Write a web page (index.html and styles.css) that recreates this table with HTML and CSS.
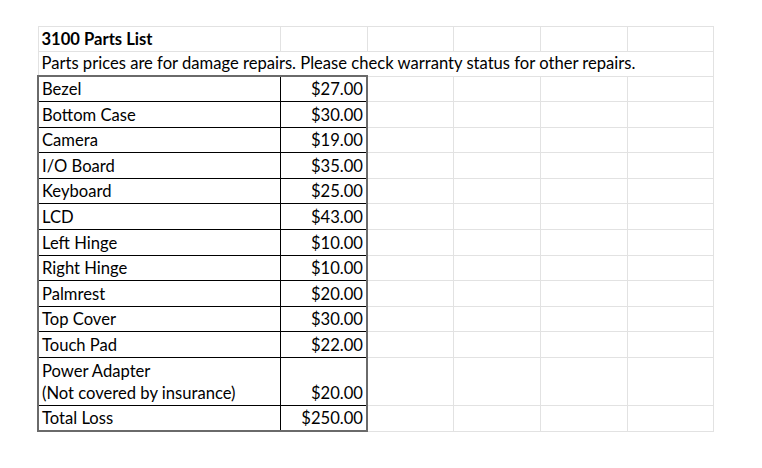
FILE: index.html
```html
<!DOCTYPE html>
<html>
<head>
<meta charset="utf-8">
<link rel="stylesheet" href="styles.css">
</head>
<body>
<table class="sheet">
  <colgroup>
    <col class="ca"><col class="cb"><col class="cc"><col class="cd"><col class="ce"><col class="cf">
  </colgroup>
  <tr class="r1"><td class="title">3100 Parts List</td><td></td><td></td><td></td><td></td><td></td></tr>
  <tr class="r2"><td class="note" colspan="6">Parts prices are for damage repairs. Please check warranty status for other repairs.</td></tr>
  <tr class="r"><td class="b">Bezel</td><td class="b p">$27.00</td><td></td><td></td><td></td><td></td></tr>
  <tr class="r"><td class="b">Bottom Case</td><td class="b p">$30.00</td><td></td><td></td><td></td><td></td></tr>
  <tr class="r"><td class="b">Camera</td><td class="b p">$19.00</td><td></td><td></td><td></td><td></td></tr>
  <tr class="r"><td class="b">I/O Board</td><td class="b p">$35.00</td><td></td><td></td><td></td><td></td></tr>
  <tr class="r"><td class="b">Keyboard</td><td class="b p">$25.00</td><td></td><td></td><td></td><td></td></tr>
  <tr class="r"><td class="b">LCD</td><td class="b p">$43.00</td><td></td><td></td><td></td><td></td></tr>
  <tr class="r"><td class="b">Left Hinge</td><td class="b p">$10.00</td><td></td><td></td><td></td><td></td></tr>
  <tr class="r"><td class="b">Right Hinge</td><td class="b p">$10.00</td><td></td><td></td><td></td><td></td></tr>
  <tr class="r"><td class="b">Palmrest</td><td class="b p">$20.00</td><td></td><td></td><td></td><td></td></tr>
  <tr class="r"><td class="b">Top Cover</td><td class="b p">$30.00</td><td></td><td></td><td></td><td></td></tr>
  <tr class="r"><td class="b">Touch Pad</td><td class="b p">$22.00</td><td></td><td></td><td></td><td></td></tr>
  <tr class="rt"><td class="b">Power Adapter<br>(Not covered by insurance)</td><td class="b p">$20.00</td><td></td><td></td><td></td><td></td></tr>
  <tr class="r last"><td class="b">Total Loss</td><td class="b p">$250.00</td><td></td><td></td><td></td><td></td></tr>
</table>
</body>
</html>
```
FILE: styles.css
```css
html, body {
  margin: 0;
  padding: 0;
  background: #ffffff;
}
body {
  padding: 26px 0 0 37px;
  font-family: Lato, "Liberation Sans", sans-serif;
  font-size: 16.6px;
  color: #000;
}
.sheet {
  border-collapse: collapse;
  table-layout: fixed;
  width: 675px;
}
.ca { width: 242px; }
.cb { width: 87px; }
.cc { width: 86px; }
.cd { width: 87px; }
.ce { width: 87px; }
.cf { width: 86px; }
.sheet td {
  border: 1px solid #e2e2e2;
  padding: 0 3px 1px 3px;
  vertical-align: bottom;
  white-space: nowrap;
  line-height: 22px;
  overflow: visible;
}
.r1 { height: 25px; }
.r { height: 25.6px; }
.r2 { height: 24px; }
.rt { height: 48px; }
.title { font-weight: bold; }
.sheet td.b {
  border: 1px solid #000;
}
.sheet td.p {
  text-align: right;
  border-right: 2px solid #6a6a6a;
}
.last td.b {
  border-bottom: 2px solid #6a6a6a;
}
.sheet tr:nth-child(3) td.b { border-top: 2px solid #6a6a6a; }
.sheet td.b:first-child { border-left: 2px solid #6a6a6a; }
```
